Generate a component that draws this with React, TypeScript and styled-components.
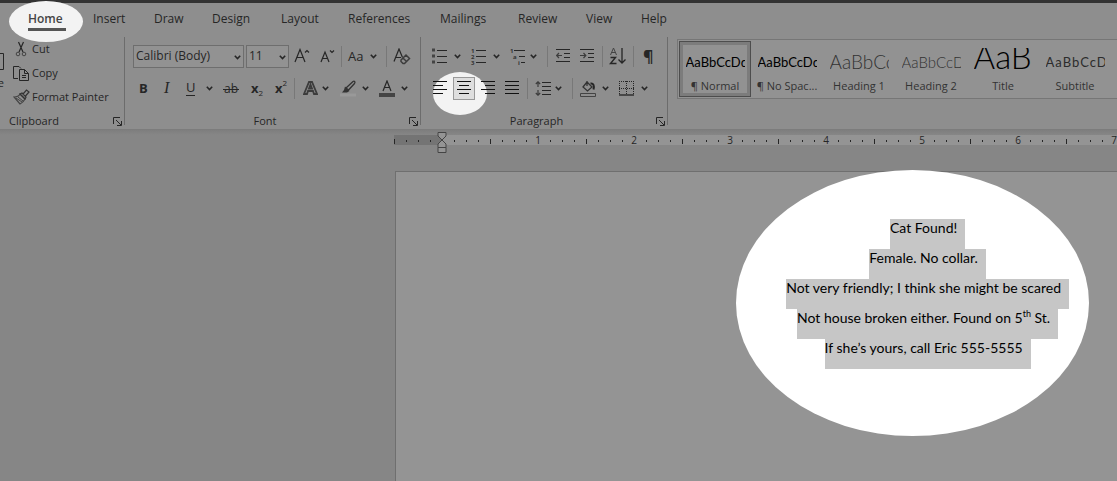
import React from "react";
import styled, { createGlobalStyle, css } from "styled-components";

const ink = "#262626";
const ui = '"Open Sans", "Noto Sans", sans-serif';
const body = 'Lato, "Open Sans", sans-serif';

const GlobalStyle = createGlobalStyle`
  *, *::before, *::after { box-sizing: border-box; }
  body { margin: 0; background: #868686; color: ${ink}; font: 11px/16px ${ui}; }
  button { border: 0; padding: 0; margin: 0; background: none; color: inherit; font: inherit; cursor: pointer; }
  svg { display: block; flex: none; }
  p { margin: 0; }
`;

const Window = styled.div`
  display: flex;
  flex-direction: column;
  min-height: 100vh;
  overflow: hidden;
`;

const TitleStrip = styled.div`
  height: 3px;
  background: #333;
`;

const Ribbon = styled.header`
  isolation: isolate;
  background: #8e8e8e;
  border-bottom: 1px solid #7c7c7c;
`;

const Spotlight = styled.span<{ $w: number; $h: number }>`
  position: absolute;
  z-index: -1;
  width: ${(p) => p.$w}px;
  height: ${(p) => p.$h}px;
  border-radius: 50%;
  background: #f3f3f3;
  pointer-events: none;
`;

const HomeSpot = styled(Spotlight)`
  left: -19px;
  top: -2px;
`;

const AlignSpot = styled(Spotlight)`
  left: -21px;
  top: -6px;
`;

const PageSpot = styled(Spotlight)`
  right: 28px;
  top: -2px;
  z-index: 0;
  background: #fff;
`;

const Tabs = styled.nav`
  display: grid;
  grid-template-columns: 65px 61px 58px 69px 67px 92px 78px 68px 55px 60px;
  height: 34px;
  padding-left: 28px;
`;

const Tab = styled.button<{ $active?: boolean }>`
  position: relative;
  justify-self: start;
  height: 31px;
  font-size: 12px;
  line-height: 31px;
  ${(p) =>
    p.$active &&
    css`
      width: 38px;
      text-align: left;
      font-weight: 600;
      color: #444;
      &::after {
        content: "";
        position: absolute;
        left: 0;
        right: 0;
        bottom: 3px;
        height: 3px;
        background: #555;
      }
    `}
`;

const Groups = styled.div`
  display: flex;
  height: 92px;
`;

const Group = styled.section<{ $w: number }>`
  position: relative;
  display: flex;
  flex-direction: column;
  flex: none;
  width: ${(p) => p.$w}px;
  padding-top: 3px;
  &::after {
    content: "";
    position: absolute;
    right: 0;
    top: 0;
    width: 1px;
    height: 88px;
    background: #6c6c6c;
  }
`;

const Row = styled.div<{ $cols: string; $inset: number }>`
  display: grid;
  grid-template-columns: ${(p) => p.$cols};
  align-items: center;
  justify-items: start;
  height: 32px;
  padding-left: ${(p) => p.$inset}px;
`;

const Caption = styled.div<{ $start?: boolean }>`
  display: flex;
  justify-content: ${(p) => (p.$start ? "flex-start" : "center")};
  align-items: center;
  position: relative;
  height: 16px;
  margin-top: auto;
  padding: 0 24px 0 ${(p) => (p.$start ? 9 : 8)}px;
`;

const Launcher = styled.button`
  position: absolute;
  right: 3px;
  top: 4px;
`;

const Divider = styled.span`
  width: 1px;
  height: 21px;
  background: #787878;
`;

const Tool = styled.button`
  display: flex;
  align-items: center;
  justify-content: center;
`;

const Glyph = styled(Tool)<{ $bold?: boolean; $italic?: boolean; $size?: number }>`
  font-size: ${(p) => p.$size ?? 14}px;
  line-height: 20px;
  font-weight: ${(p) => (p.$bold ? 700 : 400)};
  font-style: ${(p) => (p.$italic ? "italic" : "normal")};
  font-family: ${(p) => (p.$italic ? '"Liberation Serif", serif' : ui)};
`;

const Script = styled.span<{ $up?: boolean }>`
  align-self: ${(p) => (p.$up ? "flex-start" : "flex-end")};
  font-size: 8px;
  line-height: 10px;
  font-weight: 400;
`;

const Underlined = styled.span`
  border-bottom: 1px solid ${ink};
  line-height: 15px;
`;

const ActiveTool = styled(Tool)`
  position: relative;
  width: 22px;
  height: 23px;
  border: 1px solid #999;
  background: #dedede;
`;

const ComboBox = styled.label<{ $w: number }>`
  position: relative;
  display: block;
  width: ${(p) => p.$w}px;
  height: 23px;
  svg { position: absolute; right: 3px; top: 10px; pointer-events: none; }
`;

const Select = styled.select`
  appearance: none;
  width: 100%;
  height: 100%;
  padding: 0 0 0 2px;
  border: 1px solid #6e6e6e;
  border-radius: 0;
  background: #929292;
  color: ${ink};
  font: 12px/20px ${ui};
`;

const ClipboardBody = styled.div`
  display: flex;
  gap: 9px;
`;

const Paste = styled.button`
  display: flex;
  flex-direction: column;
  gap: 4px;
  width: 4px;
  height: 64px;
  padding-top: 13px;
  overflow: hidden;
  direction: rtl;
`;

const ClipList = styled.div`
  display: flex;
  flex-direction: column;
  margin-top: -3px;
`;

const ClipItem = styled.button`
  display: grid;
  grid-template-columns: 19px auto;
  align-items: center;
  justify-content: start;
  height: 24px;
  text-align: left;
  white-space: nowrap;
`;

const Gallery = styled.div`
  display: flex;
  flex: 1;
  min-width: 0;
  height: 60px;
  margin: 2px 0 0 9px;
  padding-left: 1px;
  border: 1px solid #767676;
  border-right: 0;
  background: #929292;
  overflow: hidden;
`;

const StyleCard = styled.button<{ $selected?: boolean }>`
  flex: none;
  display: flex;
  flex-direction: column;
  align-items: center;
  width: 72px;
  height: 56px;
  margin-top: 1px;
  padding-top: 7px;
  white-space: nowrap;
  color: #333;
  ${(p) =>
    p.$selected &&
    css`
      border: 1px solid #4d4d4d;
      box-shadow: inset 0 0 0 3px #7c7c7c;
      padding-top: 6px;
    `}
`;

const Preview = styled.span<{ $size: number; $color: string; $light?: boolean; $wide?: boolean }>`
  display: flex;
  align-items: flex-end;
  width: 59px;
  height: 24px;
  overflow: hidden;
  font-family: ${body};
  font-size: ${(p) => p.$size}px;
  line-height: ${(p) => (p.$size > 30 ? 32 : 20)}px;
  font-weight: ${(p) => (p.$light ? 300 : 400)};
  letter-spacing: ${(p) => (p.$wide ? 1 : 0)}px;
  color: ${(p) => p.$color};
`;

const StyleName = styled.span`
  margin-top: 6px;
`;

const Workspace = styled.main`
  flex: 1;
  display: flex;
  flex-direction: column;
  padding-top: 5px;
  background: linear-gradient(#7e7e7e, #868686 5px);
`;

const Ruler = styled.div`
  position: relative;
  display: flex;
  height: 10px;
  margin-left: 394px;
  background: #949494;
`;

const RulerMargin = styled.div`
  display: flex;
  flex: none;
  width: 48px;
  background: #747474;
`;

const RulerScale = styled.div`
  display: flex;
  flex: 1;
  min-width: 0;
  overflow: hidden;
  padding-left: 6px;
`;

const Tick = styled.span<{ $kind: "dot" | "half" | "num"; $left?: boolean }>`
  flex: none;
  display: flex;
  align-items: center;
  justify-content: ${(p) => (p.$left ? "flex-start" : "center")};
  width: 12px;
  font-size: 10px;
  line-height: 10px;
  &::before {
    content: "";
    display: ${(p) => (p.$kind === "num" ? "none" : "block")};
    width: 1px;
    height: ${(p) => (p.$kind === "half" ? 5 : 2)}px;
    margin-top: 2px;
    background: ${ink};
  }
`;

const IndentMarker = styled.svg`
  position: absolute;
  left: 43px;
  top: -3px;
`;

const Paper = styled.article`
  position: relative;
  flex: 1;
  display: flex;
  margin: 26px 0 0 395px;
  padding: 47px 48px 47px 47px;
  border: solid #6f6f6f;
  border-width: 1px 0 0 1px;
  background: #949494;
`;

const TextFlow = styled.div`
  position: relative;
  display: flex;
  flex-direction: column;
  align-items: center;
  margin-left: auto;
`;

const Line = styled.p`
  height: 30px;
  padding-right: 8px;
  background: #c6c6c6;
  color: #000;
  font: 14px/18px ${body};
  white-space: nowrap;
`;

const Sup = styled.sup`
  font-size: 9px;
  line-height: 0;
`;

type SvgProps = { w: number; h: number; children: React.ReactNode };
const Icon = ({ w, h, children }: SvgProps) => (
  <svg width={w} height={h} viewBox={`0 0 ${w} ${h}`} fill="none" stroke={ink} aria-hidden="true">
    {children}
  </svg>
);

const Chevron = () => (
  <Icon w={7} h={5}>
    <path d="M.8 .8l2.700 2.700L6.200 .8" strokeWidth="1.600" />
  </Icon>
);

const Drop = ({ label }: { label: string }) => (
  <Tool aria-label={label}>
    <Chevron />
  </Tool>
);

const DialogLauncher = ({ label }: { label: string }) => (
  <Launcher aria-label={label}>
    <Icon w={9} h={9}>
      <path d="M.5 7V.5H7M3 3l5 5M8.500 4v4.500H4" />
    </Icon>
  </Launcher>
);

const Lines = ({ spans }: { spans: number[][] }) => (
  <Icon w={14} h={14}>
    {spans.map(([a, b], i) => (
      <path key={i} d={`M${a} ${i * 4 + 0.5}H${b}`} stroke="#111" />
    ))}
  </Icon>
);

const GrowShrink = ({ up }: { up?: boolean }) => (
  <Icon w={17} h={16}>
    {up ? (
      <path d="M1 14L6 1.500l5 12.500M3 9.500h6M11 4.500l2-2 2 2" strokeWidth="1.200" />
    ) : (
      <path d="M2 14L6 4l4 10M3.500 10.500h5M11 2.500l2 2 2-2" strokeWidth="1.200" />
    )}
  </Icon>
);

const ClearFormat = () => (
  <Icon w={18} h={17}>
    <path d="M1 13.500L6 1l3.500 8.500M3 9.500h5" strokeWidth="1.200" />
    <path d="M8 12l5-5 3.500 3.500-5 5H10L8 13.500zM10 10l3.500 3.500" stroke="#3c3c3c" strokeWidth="1.500" />
  </Icon>
);

const OutlineA = () => (
  <Icon w={15} h={14}>
    <path d="M1 13L6 1h3l5 12h-3l-1-3H5l-1 3zM6 7.500h3L7.500 3.500z" stroke="#3c3c3c" strokeWidth="1.800" />
  </Icon>
);

const Highlighter = () => (
  <Icon w={16} h={17}>
    <path d="M6 8l7-6.500c1.500-1 2.500.5 1.500 2L8.500 10z" stroke="#333" strokeWidth="1.300" />
    <path d="M5 6.500L9.500 11 7 12.500H2L4 10z" fill="#333" stroke="none" />
    <path d="M0 15h16" stroke="#999" strokeWidth="3" />
  </Icon>
);

const FontColor = () => (
  <Icon w={16} h={17}>
    <path d="M4 11L8 1l4 10M5.500 7.500h5" strokeWidth="1.200" />
    <path d="M0 15h16" stroke="#444" strokeWidth="4" />
  </Icon>
);

const Strike = () => (
  <Icon w={16} h={16}>
    <text x="8" y="13" textAnchor="middle" fontFamily="Open Sans" fontSize="12" fill={ink} stroke="none">
      ab
    </text>
    <path d="M0 9.500h16" />
  </Icon>
);

const Bullets = () => (
  <Icon w={15} h={16}>
    <path d="M0 2h3M0 8h3M0 14h3" stroke="#444" strokeWidth="3" />
    <path d="M5 2.500h10M5 8.500h10M5 14.500h10" />
  </Icon>
);

const tiny = { fontFamily: "Open Sans", fontSize: 6, fill: "#333", stroke: "none", fontWeight: 700 };

const Numbering = () => (
  <Icon w={17} h={17}>
    <text x="1" y="5" {...tiny}>1</text>
    <text x="1" y="11" {...tiny}>2</text>
    <text x="1" y="17" {...tiny}>3</text>
    <path d="M6 2.500h10M6 8.500h10M6 14.500h10" />
  </Icon>
);

const Multilevel = () => (
  <Icon w={17} h={17}>
    <text x="1" y="5" {...tiny}>1</text>
    <text x="4" y="11" {...tiny}>a</text>
    <text x="9" y="17" {...tiny}>i</text>
    <path d="M5 2.500h11M10 8.500h6M12 14.500h4" />
  </Icon>
);

const Indent = ({ out }: { out?: boolean }) => (
  <Icon w={15} h={14}>
    <path d="M0 .5h14M8 4.500h6M8 8.500h6M0 12.500h14" />
    <path d={out ? "M6 6.500H1M3 4L.7 6.500 3 9" : "M0 6.500h5M3.500 4l2.300 2.500L3.500 9"} stroke="#3c3c3c" strokeWidth="1.200" />
  </Icon>
);

const Sort = () => (
  <Icon w={17} h={18}>
    <path d="M1.500 8L4.500 1l3 7M2.500 5.500h4" stroke="#444" />
    <path d="M1.500 10.500h5l-5 6h6" strokeWidth="1.400" />
    <path d="M13 1v15M9.500 12.500l3.500 3.500 3.500-3.500" strokeWidth="1.300" />
  </Icon>
);

const Spacing = () => (
  <Icon w={17} h={15}>
    <path d="M7 1.500h9M7 5.500h9M7 9.500h9M7 13.500h9" />
    <path d="M3 1v5M.8 3L3 .8 5.200 3M3 9v5M.8 12L3 14.200 5.200 12" stroke="#3c3c3c" strokeWidth="1.200" />
  </Icon>
);

const Shading = () => (
  <Icon w={17} h={17}>
    <path d="M7 1v5M7 2l5 5L7.500 11 3 7z" stroke="#333" strokeWidth="1.300" />
    <path d="M10.500 3.500c3-.5 4 2 3 6" strokeWidth="2" />
    <path d="M.5 13.500h15v3H.5z" stroke="#444" />
  </Icon>
);

const Borders = () => (
  <Icon w={15} h={16}>
    <path d="M.5 1v13M14.500 1v13M7.500 1v13M0 1.500h15M0 8.500h15" strokeDasharray="1 1" />
    <path d="M0 15h15" stroke="#000" />
  </Icon>
);

const Scissors = () => (
  <Icon w={16} h={16}>
    <path d="M5.500 1l4.500 10M10.500 1L6 11" strokeWidth="1.200" />
    <circle cx="5" cy="13" r="1.800" stroke="#444" />
    <circle cx="11" cy="13" r="1.800" stroke="#444" />
  </Icon>
);

const CopyIcon = () => (
  <Icon w={17} h={17}>
    <path d="M5 13.500H.5v-12H6l2 2" />
    <path d="M6.500 4.500h5l4 4v7h-9zM11.500 4.500v4h4M9 10.500h4M9 12.500h4" />
  </Icon>
);

const Brush = () => (
  <Icon w={17} h={16}>
    <path d="M1 8c3 0 5-1 6-3l5 5c-1 2-3 4-5 5z" stroke="#444" strokeWidth="1.200" />
    <path d="M3 9l6 4M5 8l5 4" stroke="#444" />
    <path d="M7 5l2-1 4 4-1 2zM10 5l3.500-4L16 3l-3.500 4" stroke="#333" strokeWidth="1.200" />
  </Icon>
);

const tabs = ["Insert", "Draw", "Design", "Layout", "References", "Mailings", "Review", "View", "Help"];

const styles = [
  { sample: "AaBbCcDd", name: "¶ Normal", size: 13, color: "#000", selected: true },
  { sample: "AaBbCcDd", name: "¶ No Spac...", size: 13, color: "#000" },
  { sample: "AaBbCc", name: "Heading 1", size: 19, color: "#333", light: true },
  { sample: "AaBbCcD", name: "Heading 2", size: 15, color: "#333", light: true },
  { sample: "AaB", name: "Title", size: 33, color: "#000", light: true },
  { sample: "AaBbCcD", name: "Subtitle", size: 13, color: "#2c2c2c", wide: true },
  { sample: "AaBbCcDd", name: "Subtle Em...", size: 13, color: "#2c2c2c" },
];

const kindOf = (n: number) => (n % 8 === 0 ? "num" : n % 4 === 0 ? "half" : "dot");

export default function App() {
  return (
    <Window>
      <GlobalStyle />
      <TitleStrip />
      <Ribbon>
        <Tabs>
          <Tab $active>
            <HomeSpot $w={74} $h={41} />
            Home
          </Tab>
          {tabs.map((t) => (
            <Tab key={t}>{t}</Tab>
          ))}
        </Tabs>
        <Groups>
          <Group $w={125}>
            <ClipboardBody>
              <Paste aria-label="Paste">
                <Icon w={16} h={18}>
                  <path d="M0 .5h15.500v16H0" />
                </Icon>
                <span>Paste</span>
              </Paste>
              <ClipList>
                <ClipItem><Scissors />Cut</ClipItem>
                <ClipItem><CopyIcon />Copy</ClipItem>
                <ClipItem><Brush />Format Painter</ClipItem>
              </ClipList>
            </ClipboardBody>
            <Caption $start>
              Clipboard
              <DialogLauncher label="Clipboard settings" />
            </Caption>
          </Group>

          <Group $w={296}>
            <Row $inset={8} $cols="113px 48px 25px 22px 7px 22px 16px 7px 20px">
              <ComboBox $w={111}>
                <Select aria-label="Font">
                  <option>Calibri (Body)</option>
                </Select>
                <Chevron />
              </ComboBox>
              <ComboBox $w={43}>
                <Select aria-label="Font size">
                  <option>11</option>
                </Select>
                <Chevron />
              </ComboBox>
              <Tool aria-label="Increase font size"><GrowShrink up /></Tool>
              <Tool aria-label="Decrease font size"><GrowShrink /></Tool>
              <Divider />
              <Glyph $size={13} aria-label="Change case">Aa</Glyph>
              <Drop label="Case options" />
              <Divider />
              <Tool aria-label="Clear formatting"><ClearFormat /></Tool>
            </Row>
            <Row $inset={14} $cols="25px 22px 20px 17px 28px 24px 19px 9px 19px 18px 22px 17px 22px 8px">
              <Glyph $bold $size={13}>B</Glyph>
              <Glyph $italic $size={16}>I</Glyph>
              <Glyph $size={13}><Underlined>U</Underlined></Glyph>
              <Drop label="Underline options" />
              <Tool aria-label="Strikethrough"><Strike /></Tool>
              <Glyph $bold $size={13}>x<Script>2</Script></Glyph>
              <Glyph $bold $size={13}>x<Script $up>2</Script></Glyph>
              <Divider />
              <Tool aria-label="Text effects"><OutlineA /></Tool>
              <Drop label="Text effect options" />
              <Tool aria-label="Highlight"><Highlighter /></Tool>
              <Drop label="Highlight colors" />
              <Tool aria-label="Font color"><FontColor /></Tool>
              <Drop label="Font colors" />
            </Row>
            <Caption>
              Font
              <DialogLauncher label="Font settings" />
            </Caption>
          </Group>

          <Group $w={247}>
            <Row $inset={11} $cols="22px 16px 23px 16px 21px 17px 9px 24px 22px 7px 24px 10px 14px">
              <Tool aria-label="Bullets"><Bullets /></Tool>
              <Drop label="Bullet options" />
              <Tool aria-label="Numbering"><Numbering /></Tool>
              <Drop label="Numbering options" />
              <Tool aria-label="Multilevel list"><Multilevel /></Tool>
              <Drop label="Multilevel options" />
              <Divider />
              <Tool aria-label="Decrease indent"><Indent out /></Tool>
              <Tool aria-label="Increase indent"><Indent /></Tool>
              <Divider />
              <Tool aria-label="Sort"><Sort /></Tool>
              <Divider />
              <Glyph $bold $size={16} aria-label="Show marks">¶</Glyph>
            </Row>
            <Row $inset={12} $cols="20px 28px 24px 22px 8px 20px 17px 8px 22px 17px 22px 8px">
              <Tool aria-label="Align left"><Lines spans={[[0, 14], [0, 10], [0, 14], [0, 10]]} /></Tool>
              <ActiveTool aria-label="Center">
                <AlignSpot $w={54} $h={43} />
                <Lines spans={[[0, 14], [2, 12], [0, 14], [2, 12]]} />
              </ActiveTool>
              <Tool aria-label="Align right"><Lines spans={[[0, 14], [4, 14], [0, 14], [4, 14]]} /></Tool>
              <Tool aria-label="Justify"><Lines spans={[[0, 14], [0, 14], [0, 14], [0, 14]]} /></Tool>
              <Divider />
              <Tool aria-label="Line spacing"><Spacing /></Tool>
              <Drop label="Spacing options" />
              <Divider />
              <Tool aria-label="Shading"><Shading /></Tool>
              <Drop label="Shading colors" />
              <Tool aria-label="Borders"><Borders /></Tool>
              <Drop label="Border options" />
            </Row>
            <Caption>
              Paragraph
              <DialogLauncher label="Paragraph settings" />
            </Caption>
          </Group>

          <Gallery>
            {styles.map((s) => (
              <StyleCard key={s.name} $selected={s.selected}>
                <Preview $size={s.size} $color={s.color} $light={s.light} $wide={s.wide}>
                  {s.sample}
                </Preview>
                <StyleName>{s.name}</StyleName>
              </StyleCard>
            ))}
          </Gallery>
        </Groups>
      </Ribbon>

      <Workspace>
        <Ruler>
          <RulerMargin>
            <Tick $kind="half" $left />
            <Tick $kind="dot" $left />
            <Tick $kind="dot" $left />
            <Tick $kind="dot" $left />
          </RulerMargin>
          <RulerScale>
            {Array.from({ length: 176 }, (_, i) => i + 1).map((n) => (
              <Tick key={n} $kind={kindOf(n)}>
                {n % 8 === 0 ? n / 8 : null}
              </Tick>
            ))}
          </RulerScale>
          <IndentMarker width="10" height="22" viewBox="0 0 10 22" fill="#949494" stroke="#444" aria-hidden="true">
            <path d="M1 .5h8V4L5 8 1 4zM5 8l4 4v3.500H1V12zM1 15.500h8v5H1z" />
          </IndentMarker>
        </Ruler>
        <Paper>
          <PageSpot $w={353} $h={266} />
          <TextFlow>
            <Line>Cat Found!</Line>
            <Line>Female. No collar.</Line>
            <Line>Not very friendly; I think she might be scared</Line>
            <Line>
              Not house broken either. Found on 5<Sup>th</Sup> St.
            </Line>
            <Line>If she’s yours, call Eric 555-5555</Line>
          </TextFlow>
        </Paper>
      </Workspace>
    </Window>
  );
}
